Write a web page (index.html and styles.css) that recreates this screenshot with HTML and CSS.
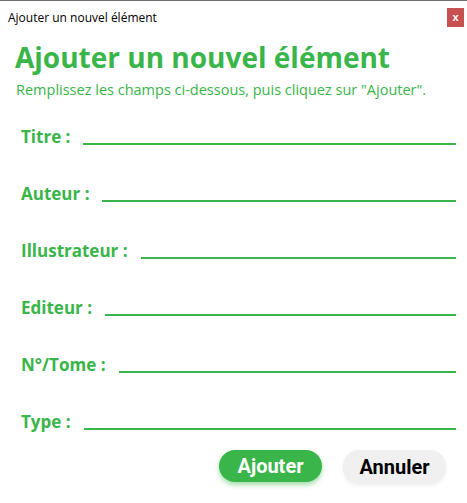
FILE: index.html
```html
<!DOCTYPE html>
<html lang="fr">
<head>
<meta charset="utf-8">
<title>Ajouter un nouvel élément</title>
<link rel="stylesheet" href="styles.css">
</head>
<body>
<div class="window">
  <div class="titlebar">
    <span class="titlebar-text">Ajouter un nouvel élément</span>
    <button class="close-btn">x</button>
  </div>
  <div class="content">
    <h1 class="heading">Ajouter un nouvel élément</h1>
    <p class="subtitle">Remplissez les champs ci-dessous, puis cliquez sur "Ajouter".</p>
    <div class="form">
      <div class="row"><span class="label">Titre :</span><span class="line"></span></div>
      <div class="row"><span class="label">Auteur :</span><span class="line"></span></div>
      <div class="row"><span class="label">Illustrateur :</span><span class="line"></span></div>
      <div class="row"><span class="label">Editeur :</span><span class="line"></span></div>
      <div class="row"><span class="label">N°/Tome :</span><span class="line"></span></div>
      <div class="row"><span class="label">Type :</span><span class="line"></span></div>
    </div>
    <div class="actions">
      <button class="btn btn-primary">Ajouter</button>
      <button class="btn btn-secondary">Annuler</button>
    </div>
  </div>
</div>
</body>
</html>
```
FILE: styles.css
```css
html, body {
  margin: 0;
  padding: 0;
  background: #ffffff;
}
.window {
  width: 467px;
  height: 503px;
  box-sizing: border-box;
  border-top: 1px solid #6e6e6e;
  font-family: "Open Sans", "Noto Sans", sans-serif;
}
.titlebar {
  height: 37px;
  display: flex;
  align-items: flex-start;
  justify-content: space-between;
  padding: 7px 3px 0 8px;
  box-sizing: border-box;
}
.titlebar-text {
  font-size: 12px;
  color: #000;
  line-height: 18px;
  padding-top: 1px;
}
.close-btn {
  width: 17px;
  height: 19px;
  border: none;
  background: #c75050;
  color: #fff;
  font-family: "Liberation Sans", sans-serif;
  font-weight: bold;
  font-size: 11px;
  padding: 0;
  line-height: 17px;
}
.content {
  padding: 0 11px 0 15px;
  color: #39b54a;
}
.heading {
  margin: 0;
  font-size: 28px;
  font-weight: 700;
  line-height: 38px;
  color: #39b54a;
}
.subtitle {
  margin: 4px 0 0;
  font-size: 14.5px;
  line-height: 20px;
  padding-left: 1px;
  color: #39b54a;
}
.form {
  display: flex;
  flex-direction: column;
  padding-left: 6px;
  margin-top: -9px;
}
.row {
  display: flex;
  align-items: flex-end;
  gap: 13px;
  height: 57px;
  box-sizing: border-box;
}
.label {
  font-size: 17px;
  font-weight: 700;
  line-height: 22px;
  color: #39b54a;
}
.line {
  flex: 1;
  border-bottom: 2px solid #39b54a;
  margin-bottom: 3px;
}
.actions {
  display: flex;
  justify-content: flex-end;
  gap: 21px;
  margin-top: 17px;
  padding-right: 10px;
}
.btn {
  height: 32px;
  border: none;
  border-radius: 16px;
  font-family: Roboto, "Noto Sans", sans-serif;
  font-weight: 700;
  font-size: 20px;
  padding: 0;
}
.btn-primary {
  width: 103px;
  background: #39b54a;
  color: #fff;
  box-shadow: 0 3px 5px rgba(57, 181, 74, 0.45);
}
.btn-secondary {
  width: 103px;
  height: 34px;
  background: #f0f0f0;
  color: #000;
  box-shadow: 0 2px 4px rgba(0, 0, 0, 0.06);
}
```
